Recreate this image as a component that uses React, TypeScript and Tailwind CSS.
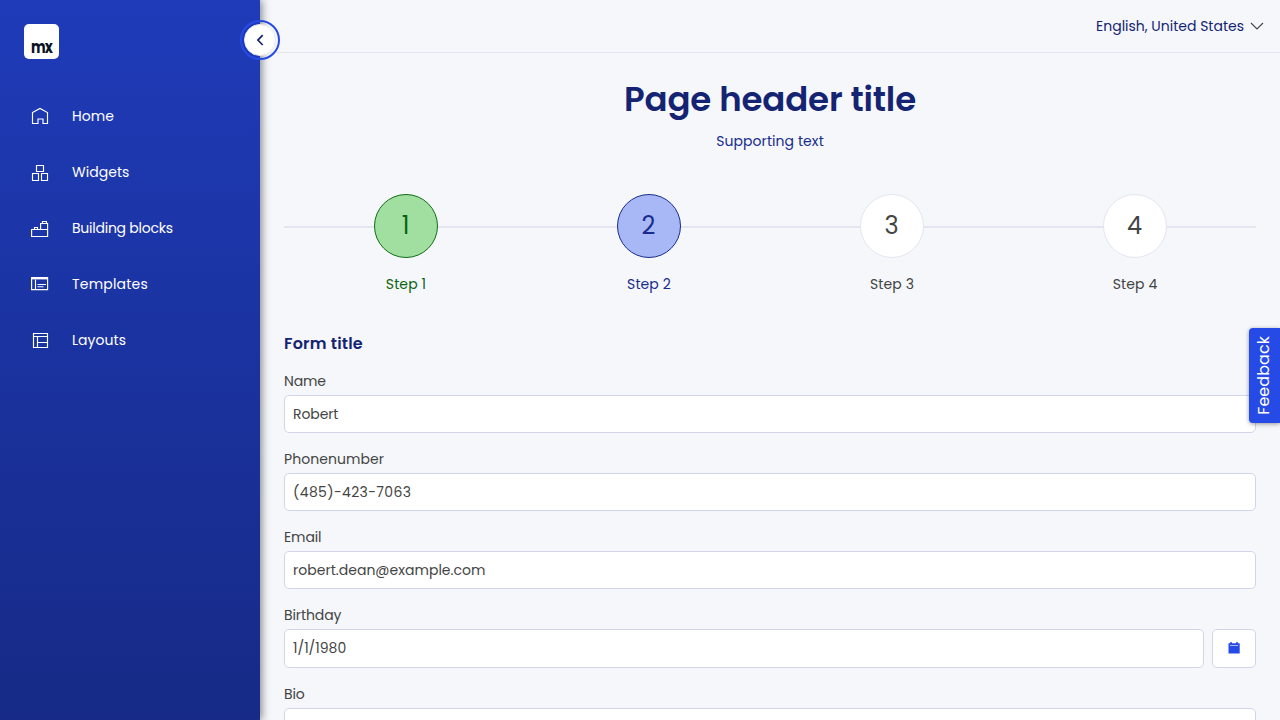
import type { ReactNode } from "react";

const navItems: { label: string; tracking: string; icon: ReactNode }[] = [
  {
    label: "Home",
    tracking: "tracking-[0.05px]",
    icon: <path d="M1.5 5.500 9 1.500l7.500 4v11h-4.500V12H7v4.500H1.500z" />,
  },
  {
    label: "Widgets",
    tracking: "tracking-[0.05px]",
    icon: <path d="M5.500 2.500h7v6h-7zM1.500 10.500h6v7h-6zM10.500 10.500h6v7h-6z" />,
  },
  {
    label: "Building blocks",
    tracking: "tracking-[-0.24px]",
    icon: <path d="M.6 17.500v-7h9v-6h7v13zM.6 10.500h16M3.500 10.500v-2h3v2M11.500 4.500v-2h4v2" />,
  },
  {
    label: "Templates",
    tracking: "tracking-[0.2px]",
    icon: (
      <>
        <path d="M.6 2.600h16v12H.6zM4.500 4.500v10M6.500 9.500h8.500M6.500 11.700h6" />
        <path d="M.6 3.200h16" strokeWidth="2.400" />
      </>
    ),
  },
  {
    label: "Layouts",
    tracking: "tracking-[0.05px]",
    icon: <path d="M2.500 2.500h14v14h-14zM2.500 5.500h14M6.500 5.500v11M6.500 11.500h10" />,
  },
];

const steps = [
  { n: "1", circle: "bg-[#a1dfa1] border-[#0f6e14] text-[#0b6410]", label: "text-[#0b6410]" },
  { n: "2", circle: "bg-[#a8b7f5] border-[#182c8d] text-[#182c8d]", label: "text-[#182c8d]" },
  { n: "3", circle: "bg-white border-[#e4e5f1] text-[#444]", label: "text-[#444]" },
  { n: "4", circle: "bg-white border-[#e4e5f1] text-[#444]", label: "text-[#444]" },
];

const fields = [
  { label: "Name", labelTracking: "tracking-[-0.2px]", value: "Robert", tracking: "tracking-[-0.1px]" },
  { label: "Phonenumber", labelTracking: "tracking-[0.05px]", value: "(485)-423-7063", tracking: "tracking-[0.36px]" },
  { label: "Email", labelTracking: "tracking-[-0.1px]", value: "robert.dean@example.com", tracking: "tracking-[0.02px]" },
];

function Sidebar() {
  return (
    <aside className="relative z-10 h-full w-[260px] shrink-0 bg-linear-to-b from-[#1f3bb9] to-[#162a86] px-2 pt-6 shadow-[2px_0_8px_rgba(0,0,0,0.45)]">
      <div className="ml-4 flex size-[35px] items-end justify-center rounded-[5px] bg-white">
        <span className="mb-[3px] block origin-bottom scale-x-[0.92] scale-y-[1.12] text-[15px] leading-[16px] font-bold tracking-[-0.9px] text-[#0a1325]">
          mx
        </span>
      </div>
      <nav className="mt-[29px] flex flex-col">
        {navItems.map((item) => (
          <a key={item.label} className="flex h-14 items-center pl-[23px] text-sm text-white">
            <svg className="mr-[23px] size-[18px] shrink-0" viewBox="0 0 18 18" fill="none" stroke="white" strokeWidth="1.15">
              {item.icon}
            </svg>
            <span className={item.tracking}>{item.label}</span>
          </a>
        ))}
      </nav>
      <button className="absolute top-5 -right-5 flex size-10 items-center justify-center rounded-full border-2 border-[#264ae5]">
        <span className="flex size-8 items-center justify-center rounded-full border border-[#e7e7f1] bg-white">
          <svg className="size-3" viewBox="0 0 12 12" fill="none" stroke="#142473" strokeWidth="1.7">
            <path d="M8.700 1.200 3.900 6.100l4.800 4.900" />
          </svg>
        </span>
      </button>
    </aside>
  );
}

function Stepper() {
  return (
    <ol className="mt-[42px] grid grid-cols-4">
      {steps.map((s) => (
        <li key={s.n} className="flex flex-col items-center">
          <div className="flex w-full items-center">
            <span className="mt-0.5 h-0.5 flex-1 bg-[#e4e5f1]" />
            <span className={`flex size-16 items-center justify-center rounded-full border text-2xl leading-none ${s.circle}`}>
              {s.n}
            </span>
            <span className="mt-0.5 h-0.5 flex-1 bg-[#e4e5f1]" />
          </div>
          <span className={`mt-4 h-[21px] pl-px text-sm leading-[21px] tracking-[0.1px] ${s.label}`}>Step {s.n}</span>
        </li>
      ))}
    </ol>
  );
}

export default function App() {
  return (
    <div className="relative flex h-[720px] w-[1280px] overflow-hidden bg-[#f5f7fb] font-[Poppins,Inter,sans-serif] text-sm text-[#444]">
      <Sidebar />
      <div className="flex min-w-0 flex-1 flex-col">
        <header className="flex h-[53px] shrink-0 items-center justify-end gap-1.5 border-b border-[#e4e6f3] pr-4 text-[#142473]">
          <span>English, United States</span>
          <svg className="size-3.5" viewBox="0 0 14 14" fill="none" stroke="#444" strokeWidth="1.1">
            <path d="m1 4 6 6 6-6" />
          </svg>
        </header>
        <main className="min-h-0 flex-1 px-6 pt-[22px]">
          <h1 className="text-center text-[34px] leading-[48px] font-semibold tracking-[-0.15px] text-[#142473]">
            Page header title
          </h1>
          <p className="mt-2 text-center leading-[21px] tracking-[0.07px] text-[#182c8d]">Supporting text</p>
          <Stepper />
          <h2 className="mt-[37px] text-base leading-6 font-semibold tracking-[0.2px] text-[#142473]">Form title</h2>
          <form>
            {fields.map((f) => (
              <div key={f.label} className="pt-4 first:pt-[15px]">
                <label className={`block leading-[21px] ${f.labelTracking}`}>{f.label}</label>
                <div className={`mt-[3px] flex h-[38px] items-center rounded-[5px] border border-[#d2d5ea] bg-white px-2 ${f.tracking}`}>
                  {f.value}
                </div>
              </div>
            ))}
            <div className="pt-4">
              <label className="block leading-[21px] tracking-[-0.1px]">Birthday</label>
              <div className="mt-[3px] flex h-[39px] gap-2">
                <div className="flex flex-1 items-center rounded-[5px] border border-[#d2d5ea] bg-white px-2 pb-px">1/1/1980</div>
                <button type="button" className="flex w-11 items-center justify-center rounded-[5px] border border-[#d2d5ea] bg-white pb-0.5">
                  <svg className="size-3" viewBox="0 0 12 12" fill="#264ae5">
                    <path d="M.5 1.200h1.500V.2h2v1h4v-1h2v1h1.700v10.300H.5z" />
                    <path d="M2 3.500h8" stroke="#a8b7f5" />
                  </svg>
                </button>
              </div>
            </div>
            <div className="pt-4">
              <label className="block leading-[21px] tracking-[-0.2px]">Bio</label>
              <div className="mt-[3px] h-24 rounded-[5px] border border-[#d2d5ea] bg-white" />
            </div>
          </form>
        </main>
      </div>
      <button className="absolute top-[328px] right-0 z-20 flex h-[95px] w-[31px] items-center justify-center rounded-l-[4px] bg-[#264ae5] pr-0.5 text-white shadow-[0_1px_4px_rgba(0,0,0,0.4)]">
        <span className="rotate-180 text-base leading-none tracking-[0.05px] [writing-mode:vertical-rl]">Feedback</span>
      </button>
    </div>
  );
}
